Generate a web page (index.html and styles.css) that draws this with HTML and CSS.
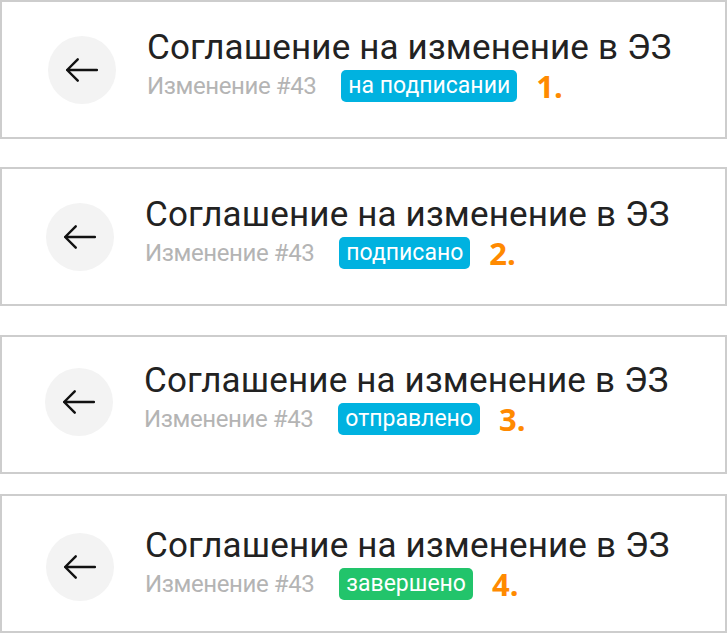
FILE: index.html
```html
<!DOCTYPE html>
<html lang="ru">
<head>
  <meta charset="UTF-8">
  <title>Статусы изменений</title>
  <link rel="stylesheet" href="styles.css">
</head>
<body>
  <main class="list">
    <section class="card card-1">
      <button class="back" aria-label="Назад">
        <svg viewBox="0 0 32 32" aria-hidden="true"><path d="M30 16H2M12 6L2 16l10 10"/></svg>
      </button>
      <div class="info">
        <h1>Соглашение на изменение в ЭЗ</h1>
        <div class="meta">
          <span class="num">Изменение #43</span>
          <span class="badge">на подписании</span>
          <span class="step">1.</span>
        </div>
      </div>
    </section>

    <section class="card card-2">
      <button class="back" aria-label="Назад">
        <svg viewBox="0 0 32 32" aria-hidden="true"><path d="M30 16H2M12 6L2 16l10 10"/></svg>
      </button>
      <div class="info">
        <h1>Соглашение на изменение в ЭЗ</h1>
        <div class="meta">
          <span class="num">Изменение #43</span>
          <span class="badge">подписано</span>
          <span class="step">2.</span>
        </div>
      </div>
    </section>

    <section class="card card-3">
      <button class="back" aria-label="Назад">
        <svg viewBox="0 0 32 32" aria-hidden="true"><path d="M30 16H2M12 6L2 16l10 10"/></svg>
      </button>
      <div class="info">
        <h1>Соглашение на изменение в ЭЗ</h1>
        <div class="meta">
          <span class="num">Изменение #43</span>
          <span class="badge">отправлено</span>
          <span class="step">3.</span>
        </div>
      </div>
    </section>

    <section class="card card-4">
      <button class="back" aria-label="Назад">
        <svg viewBox="0 0 32 32" aria-hidden="true"><path d="M30 16H2M12 6L2 16l10 10"/></svg>
      </button>
      <div class="info">
        <h1>Соглашение на изменение в ЭЗ</h1>
        <div class="meta">
          <span class="num">Изменение #43</span>
          <span class="badge badge-done">завершено</span>
          <span class="step">4.</span>
        </div>
      </div>
    </section>
  </main>
</body>
</html>
```

FILE: styles.css
```css
:root {
  --border:#cdcdcd;
  --text:#222;
  --muted:#b4b4b4;
  --blue:#00b2e0;
  --green:#22c46b;
  --orange:#ff8a00;
}
*{box-sizing:border-box;margin:0;padding:0}
body{width:727px;background:#fff;font-family:Roboto,'Liberation Sans',sans-serif;color:var(--text)}

.list{display:flex;flex-direction:column;gap:28px}
.card{
  display:flex;align-items:center;gap:31px;
  height:139px;padding-left:44px;
  border:2px solid var(--border);
}
/* the four shots are not cut quite alike */
.card-1{padding-left:46px}
.card-3{margin-top:1px;padding-left:43px;padding-bottom:5px}
.card-4{margin-top:-8px;padding-top:7px}

/* back button */
.back{
  flex:none;display:flex;align-items:center;justify-content:center;
  width:68px;height:68px;border:none;border-radius:50%;background:#f3f3f3;
}
.back svg{width:34px;height:34px;fill:none;stroke:#111;stroke-width:2.3;stroke-linecap:round;stroke-linejoin:round}

/* text */
.info{display:flex;flex-direction:column;padding-bottom:4px}
h1{font-size:35px;font-weight:400;line-height:30px;letter-spacing:.15px}
.meta{display:flex;align-items:center;margin-top:7px}
.num{font-size:24px;color:var(--muted);letter-spacing:-.4px;margin-right:25px}
.badge{
  height:32px;padding:0 7px;border-radius:5px;background:var(--blue);
  color:#fff;font-size:23px;line-height:31px;
}
.badge-done{background:var(--green)}
.step{margin-left:19px;color:var(--orange);font-family:'Open Sans','Liberation Sans',sans-serif;font-weight:700;font-size:31px;line-height:32px}
```
